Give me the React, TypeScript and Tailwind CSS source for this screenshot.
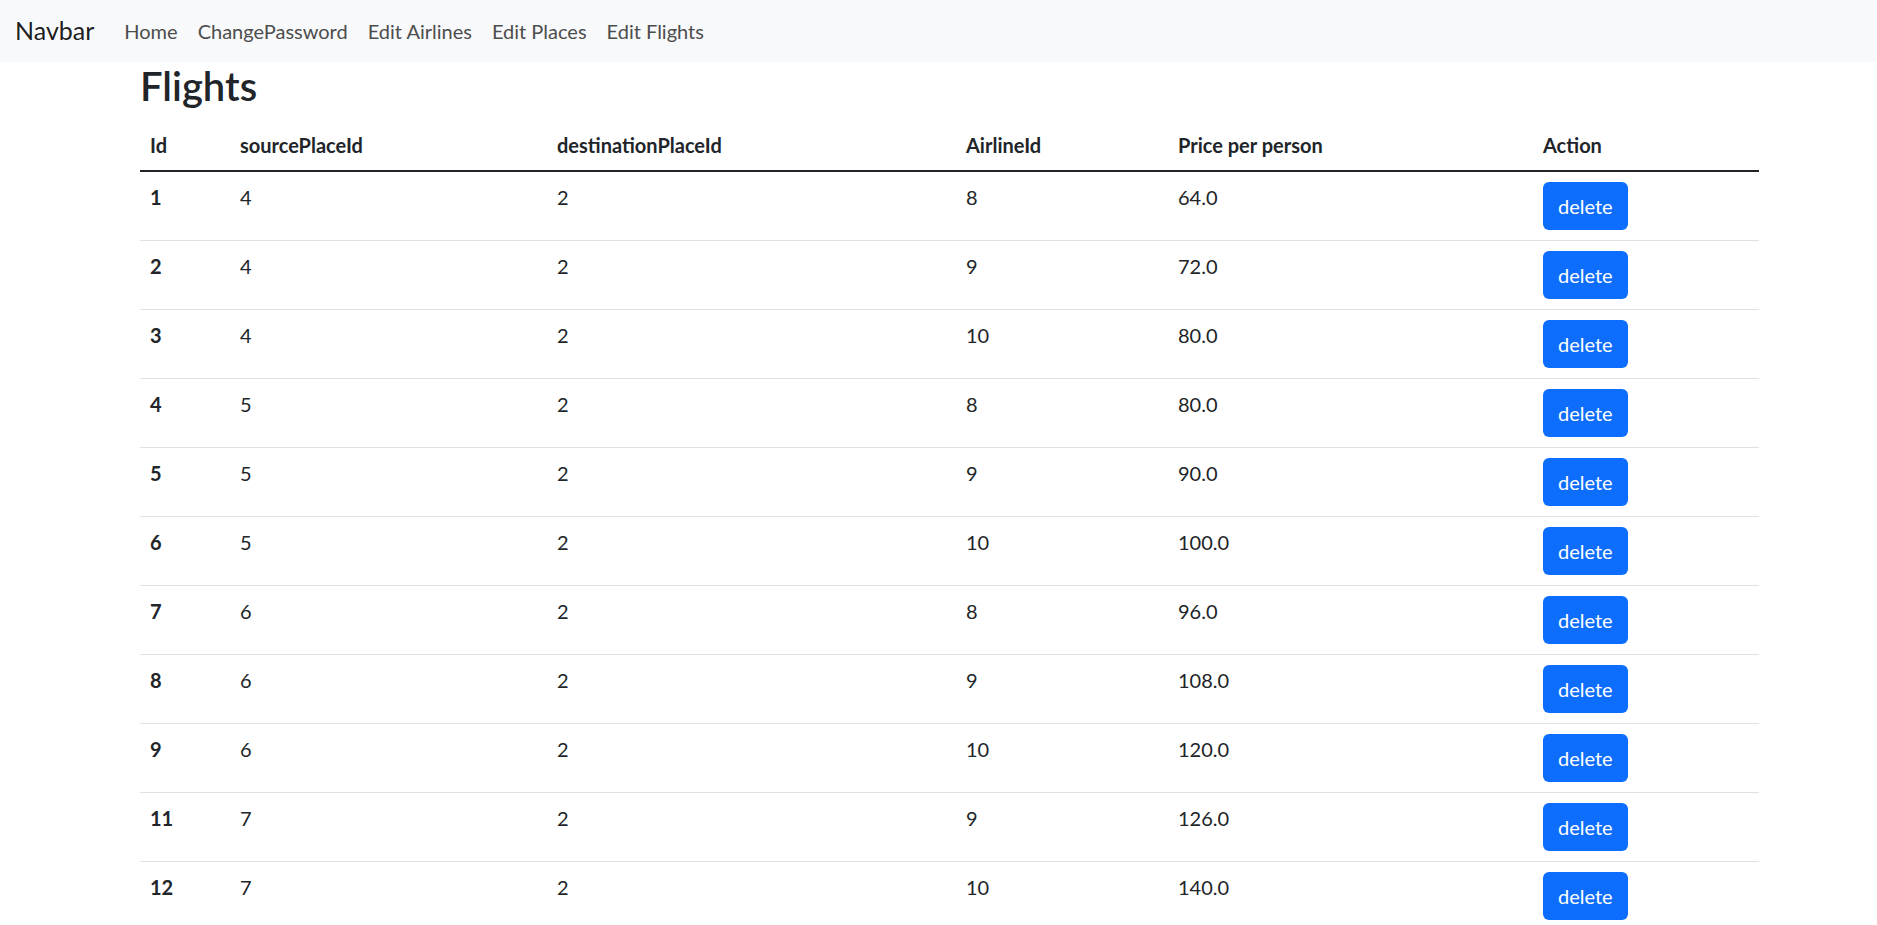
const navLinks = ['Home', 'ChangePassword', 'Edit Airlines', 'Edit Places', 'Edit Flights'];

const flights = [
    { id: 1, source: 4, destination: 2, airline: 8, price: '64.0' },
    { id: 2, source: 4, destination: 2, airline: 9, price: '72.0' },
    { id: 3, source: 4, destination: 2, airline: 10, price: '80.0' },
    { id: 4, source: 5, destination: 2, airline: 8, price: '80.0' },
    { id: 5, source: 5, destination: 2, airline: 9, price: '90.0' },
    { id: 6, source: 5, destination: 2, airline: 10, price: '100.0' },
    { id: 7, source: 6, destination: 2, airline: 8, price: '96.0' },
    { id: 8, source: 6, destination: 2, airline: 9, price: '108.0' },
    { id: 9, source: 6, destination: 2, airline: 10, price: '120.0' },
    { id: 11, source: 7, destination: 2, airline: 9, price: '126.0' },
    { id: 12, source: 7, destination: 2, airline: 10, price: '140.0' },
];

const columns = [
    { label: 'Id', width: 'w-[90px]' },
    { label: 'sourcePlaceId', width: 'w-[317px]' },
    { label: 'destinationPlaceId', width: 'w-[409px]' },
    { label: 'AirlineId', width: 'w-[212px]' },
    { label: 'Price per person', width: 'w-[365px]' },
    { label: 'Action', width: 'w-[226px]' },
];

export default function App() {
    return (
        <div className="h-[925px] overflow-hidden bg-white font-['Lato','Liberation_Sans',sans-serif] text-[#212529]">
            <nav className="flex h-[62px] items-center bg-[#f8f9fa] px-[15px]">
                <span className="mr-[20px] text-[25px] text-[rgba(0,0,0,0.9)]">Navbar</span>
                <ul className="flex items-center">
                    {navLinks.map((link) => (
                        <li key={link}>
                            <a href="#" className="block px-[10px] text-[20px] leading-[30px] text-[#4d4d4d]">
                                {link}
                            </a>
                        </li>
                    ))}
                </ul>
            </nav>

            <main className="pl-[140px] pr-[118px]">
                <h2 className="mb-[10px] text-[40px] font-semibold leading-[48px]">Flights</h2>

                <table className="w-full table-fixed border-collapse text-[20px] leading-[30px]">
                    <thead>
                        <tr className="border-b-2 border-[#212529]">
                            {columns.map((column) => (
                                <th
                                    key={column.label}
                                    className={`${column.width} px-[10px] py-[10px] text-left font-bold`}
                                >
                                    {column.label}
                                </th>
                            ))}
                        </tr>
                    </thead>
                    <tbody>
                        {flights.map((flight) => (
                            <tr key={flight.id} className="border-b border-[#dee2e6] align-top">
                                <th className="px-[10px] py-[10px] text-left font-bold">{flight.id}</th>
                                <td className="px-[10px] py-[10px]">{flight.source}</td>
                                <td className="px-[10px] py-[10px]">{flight.destination}</td>
                                <td className="px-[10px] py-[10px]">{flight.airline}</td>
                                <td className="px-[10px] py-[10px]">{flight.price}</td>
                                <td className="px-[10px] py-[10px]">
                                    <button
                                        type="button"
                                        className="h-[48px] rounded-[6px] bg-[#0d6efd] px-[15px] text-[20px] leading-[30px] text-white"
                                    >
                                        delete
                                    </button>
                                </td>
                            </tr>
                        ))}
                    </tbody>
                </table>
            </main>
        </div>
    );
}
